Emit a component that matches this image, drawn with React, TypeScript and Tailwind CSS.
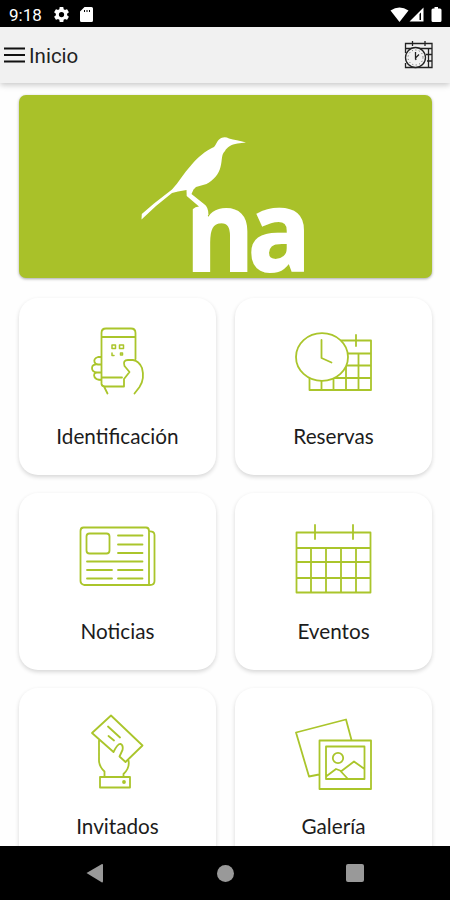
import type { ReactNode } from "react";

function StatusBar() {
  return (
    <div className="flex h-[27px] shrink-0 items-center justify-between bg-black pl-[9px] pr-2 font-['Roboto',sans-serif] text-white">
      <div className="flex items-center">
        <span className="w-[45px] pt-0.5 text-[17px] leading-5">9:18</span>
        <svg className="mt-0.5 mr-[11px] h-[15px] w-[15px]" viewBox="2 2 20 20" fill="currentColor">
          <path d="M19.43 12.98c.04-.32.07-.64.07-.98s-.03-.66-.07-.98l2.11-1.65c.19-.15.24-.42.12-.64l-2-3.46c-.12-.22-.39-.3-.61-.22l-2.49 1c-.52-.4-1.08-.73-1.69-.98l-.38-2.65A.49.49 0 0 0 14 2h-4c-.25 0-.46.18-.49.42l-.38 2.65c-.61.25-1.17.59-1.69.98l-2.49-1c-.23-.09-.49 0-.61.22l-2 3.46c-.13.22-.07.49.12.64l2.11 1.65c-.04.32-.07.65-.07.98s.03.66.07.98l-2.11 1.65c-.19.15-.24.42-.12.64l2 3.46c.12.22.39.3.61.22l2.49-1c.52.4 1.08.73 1.69.98l.38 2.65c.03.24.24.42.49.42h4c.25 0 .46-.18.49-.42l.38-2.65c.61-.25 1.17-.59 1.69-.98l2.49 1c.23.09.49 0 .61-.22l2-3.46c.12-.22.07-.49-.12-.64l-2.11-1.65zM12 15.5a3.5 3.5 0 1 1 0-7 3.5 3.5 0 0 1 0 7z" />
        </svg>
        <svg className="mt-0.5 h-[15px] w-[13px]" viewBox="0 0 13 15" fill="currentColor">
          <path fillRule="evenodd" d="M4.5 0H11.5Q13 0 13 1.5V13.5Q13 15 11.5 15H1.5Q0 15 0 13.5V4.5ZM4 3V5H5V3ZM6.5 3V5H7.5V3ZM9 3V5H10V3Z" />
        </svg>
      </div>
      <svg className="mt-0.5 h-4 w-[52px]" viewBox="0 0 52 16" fill="currentColor">
        <path d="M0.5 3.5Q9.5 -2.5 18.5 3.5L9.5 15Z" />
        <path d="M33.5 0.5V14.5H19.5ZM29.5 7V13H31V5.500Z" fillRule="evenodd" />
        <path d="M44.5 0H48V1.5H50Q51.500 1.500 51.500 3V13.500Q51.500 15 50 15H43Q41.500 15 41.500 13.500V3Q41.500 1.500 43 1.500H44.500Z" />
      </svg>
    </div>
  );
}

function Header() {
  return (
    <header className="z-10 flex h-[56px] shrink-0 items-center bg-[#f1f1f1] pl-1 pr-[17px] shadow-[0_2px_6px_rgba(0,0,0,0.22)]">
      <svg className="h-4 w-[21px]" viewBox="0 0 21 16" stroke="#111" strokeWidth="2">
        <path d="M0 1.500H21M0 8H21M0 14.500H21" />
      </svg>
      <h1 className="ml-1 flex-1 pt-0.5 font-['Roboto',sans-serif] text-[20.500px] leading-6 text-[#222]">Inicio</h1>
      <svg className="h-[30px] w-[30px]" viewBox="403 41 30 30" fill="none" stroke="#222" strokeWidth="1.300">
        <path d="M405.500 54V44.500H432V68.500H405.500V64M412.500 42V47M425 42V47M405.500 49.500H432M426 55.500H432M427 62H432M428.500 50V68" />
        <circle cx="415.500" cy="58.500" r="10" fill="#f1f1f1" />
        <path d="M415.500 53V59L419 55.500M415.500 59L416 61" />
        <circle cx="415.500" cy="58.500" r="7.500" strokeWidth="0.7" strokeDasharray="1 2.500" />
      </svg>
    </header>
  );
}

function Banner() {
  return (
    <section className="h-[183px] w-[413px] shrink-0 rounded-[7px] bg-[#a9c129] shadow-[0_1px_3px_rgba(0,0,0,0.35)]">
      <svg className="h-full w-full overflow-visible" viewBox="19 95 413 183" fill="#fff">
        <path d="M141.500 219.500L141.800 214L154 203.500L172 189.500C179 182 184 173 190.500 166C197 157.500 206 150.500 214 147C217 143.500 217.500 138.500 223 137.500Q226 136.800 229 138.500C234 140 239.500 140.500 246 142.500L237.500 143.600C231 144.500 227 147.500 225 151C221 154.500 222.500 160 220.500 167C219 174 213.500 180 206.500 184L196 187L193.500 189.500L191.500 194L204 204Q208.500 207 208.500 215H193V209Q195 206.500 199 206.500L186.700 196L186.500 190L178 191.500L172 193L156 206Z" />
        <text
          className="font-['Open_Sans',sans-serif] text-[112px] font-bold tracking-[-6.8px]"
          stroke="#fff"
          strokeWidth="1.800"
          transform="translate(185.400 270.900) scale(.935 1)"
        >
          na
        </text>
      </svg>
    </section>
  );
}

function Icon({ viewBox, children }: { viewBox: string; children: ReactNode }) {
  return (
    <svg className="h-20 w-20" viewBox={viewBox} fill="none" stroke="#aac52b" strokeWidth="1.800" strokeLinejoin="round" strokeLinecap="round">
      {children}
    </svg>
  );
}

const items = [
  {
    label: "Identificación",
    icon: (
      <Icon viewBox="78 322 80 80">
        <path d="M101.500 384V333Q101.500 328.500 106 328.500H131Q135.500 328.500 135.500 333V359M101.500 337H135.500M101.500 377.500H122M101.500 384Q102 386.500 105 386.500H124V379L129.500 372L124.500 366Q122.500 360 128 360H133Q139 361 142 368Q145 379 139.500 387L134.500 393.500M104 386.500L107.500 393.500M101.500 357H98Q93.500 358.500 94.500 362Q95 364 98 364.500H101.500M98 364.500Q92 364 92 368Q92 372 97 372.500H101.500M97 372.500Q93 373 94.500 377Q96 380 101.500 380" />
        <path d="M112 345H115.500V348.500H112ZM119.500 345H123.500V348.500H119.500ZM112 353V355.500H114M120.500 353H122.500V355H120.500Z" strokeWidth="1.500" />
      </Icon>
    ),
  },
  {
    label: "Reservas",
    icon: (
      <Icon viewBox="294 322 80 80">
        <path d="M341.500 340.500H371V390H309.500V378M356 335V346M347 353.500H371M346 365.500H371M309.500 378H371M321.500 379V390M333.500 378V390M346 365V390M358.500 353.500V390" />
        <ellipse cx="322" cy="357" rx="26" ry="23.800" fill="#fff" />
        <path d="M321.500 340V358L331.500 362.500" />
      </Icon>
    ),
  },
  {
    label: "Noticias",
    icon: (
      <Icon viewBox="78 517 80 80">
        <path d="M83.500 527.500H146Q149 527.500 149 531V585H84Q80.500 584 80.500 581V531Q80.500 527.500 83.500 527.500M149 531.500Q154.500 531 154.500 535V581Q154.500 585 150 585" />
        <rect x="86.500" y="533.500" width="23" height="20" rx="3" />
        <path d="M118 535.500H142.500M118 544.500H142.500M118 553H142.500M87 561.500H142.500M87 570H112M118 570H142.500M87 578.500H112M118 578.500H142.500" />
      </Icon>
    ),
  },
  {
    label: "Eventos",
    icon: (
      <Icon viewBox="294 517 80 80">
        <path d="M296.500 532.500H370.500V592.500H296.500ZM315 525V539M353 525V539M296.500 548H370.500M296.500 562H370.500M296.500 578H370.500M311 548V592.500M326 548V592.500M341 548V592.500M356 548V592.500" />
      </Icon>
    ),
  },
  {
    label: "Invitados",
    icon: (
      <Icon viewBox="78 712 80 80">
        <path d="M113.500 752L92 733L111 715.500L142.500 745.500L125.500 762L119.500 756.500L122.500 750Q123.500 745 120.500 743.800Q117.500 743.500 113.500 752M108 726.500L120 737.500M108.500 736L114 740.500M99 740.500V761Q99.500 767 104.500 771.500V777M128.500 760.500Q130 768 123.500 774V777" />
        <rect x="100" y="777" width="30" height="10.500" />
        <circle cx="124" cy="782" r="1" fill="#aac52b" />
      </Icon>
    ),
  },
  {
    label: "Galería",
    icon: (
      <Icon viewBox="294 712 80 80">
        <path d="M351.500 740L346 719.500L296 732.500L309 776.500L319 774.500M319.500 740.500H371V789H319.500ZM326 746.500H364.500V779H326ZM326 776.500L336 769L340 770.500L348 779M341.500 771L354 761.500L364.500 769" />
        <circle cx="338" cy="758" r="5.200" />
      </Icon>
    ),
  },
];

function NavBar() {
  return (
    <nav className="z-10 flex h-[54px] shrink-0 items-center justify-between bg-black px-[86px] text-[#999]">
      <svg className="h-5 w-[17px]" viewBox="0 0 17 20" fill="currentColor">
        <path d="M0.500 10L16 1Q17 0.800 17 1.700V18Q17 19.500 16 19.500Z" />
      </svg>
      <div className="ml-0.5 h-[17px] w-[17px] rounded-full bg-[#999]" />
      <div className="h-[18px] w-[18px] rounded-[2px] bg-[#999]" />
    </nav>
  );
}

export default function App() {
  return (
    <div className="flex h-[900px] w-[450px] flex-col overflow-hidden bg-white">
      <StatusBar />
      <Header />
      <main className="flex min-h-0 flex-1 flex-col overflow-hidden bg-[#fefefe] pl-[19px] pt-3">
        <Banner />
        <div className="mt-5 grid w-[413px] grid-cols-2 gap-x-[19px] gap-y-[18px]">
          {items.map((item) => (
            <article key={item.label} className="flex h-[177px] flex-col items-center rounded-[19px] bg-white pt-6 shadow-[0_2px_4px_rgba(0,0,0,0.16)]">
              {item.icon}
              <span className="mt-[22px] font-['Lato',sans-serif] text-[20.700px] leading-6 text-[#1c1c1c]">{item.label}</span>
            </article>
          ))}
        </div>
      </main>
      <NavBar />
    </div>
  );
}
